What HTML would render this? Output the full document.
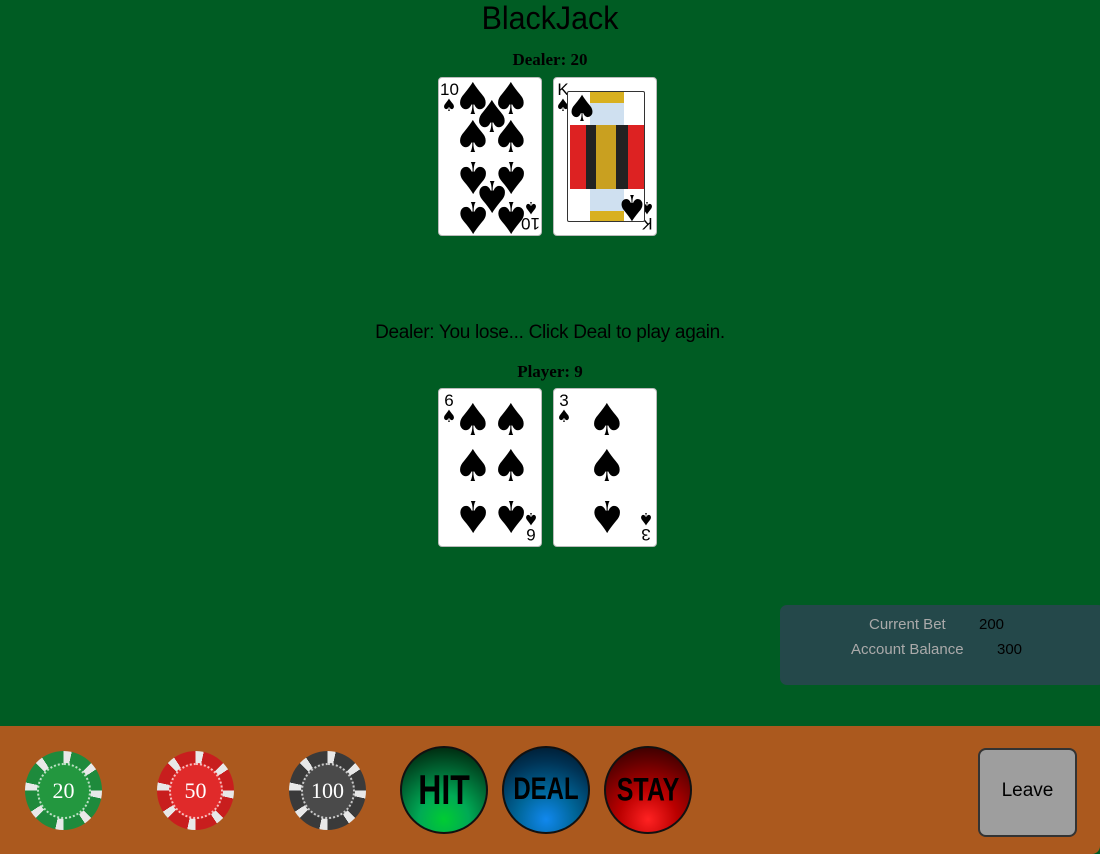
<!DOCTYPE html>
<html><head><meta charset="utf-8"><style>
*{margin:0;padding:0;box-sizing:border-box}
body{width:1100px;height:854px;background:#005c23;position:relative;overflow:hidden;font-family:"Liberation Serif",serif}
.title{position:absolute;top:0;left:0;width:1100px;text-align:center;font-family:"Liberation Sans",sans-serif;font-size:32px;color:#000;transform:scaleX(.95)}
.lbl{position:absolute;width:1100px;text-align:center;font-weight:bold;font-size:17px}
.card{position:absolute;width:104px;height:159px;background:#fff;border:1px solid #bbb;border-radius:4px;overflow:hidden}
.p{position:absolute;font-size:44px;line-height:1;transform:translate(-50%,-50%);font-family:"DejaVu Sans",sans-serif}
.r{transform:translate(-50%,-50%) rotate(180deg)}
.idx{position:absolute;font-family:"Liberation Sans",sans-serif;font-size:17px;line-height:1;text-align:center;width:18px}
.idx .s{font-size:17px;display:block;font-family:"DejaVu Sans",sans-serif}
.msg{position:absolute;top:322px;width:1100px;text-align:center;font-family:"Liberation Sans",sans-serif;font-size:19px;letter-spacing:-0.3px}
.panel{position:absolute;left:780px;top:605px;width:325px;height:80px;background:#24484a;border-radius:7px;font-family:"Liberation Sans",sans-serif;font-size:15px;color:#aaa}
.bar{position:absolute;left:0;top:726px;width:1100px;height:128px;background:#ab591e;border-bottom-right-radius:8px}
.chip{position:absolute;top:751px;width:77px;height:79px;border-radius:50%;display:flex;align-items:center;justify-content:center}
.chip .in{width:54px;height:56px;border-radius:50%;border:2px dotted rgba(255,255,255,.7);display:flex;align-items:center;justify-content:center;color:#fff;font-size:22px}
.btn{position:absolute;top:746px;width:88px;height:88px;border-radius:50%;border:2px solid #111;display:flex;align-items:center;justify-content:center;font-family:"Liberation Sans",sans-serif;font-weight:bold;color:#000}
.btn span{display:inline-block;transform:scaleY(1.3)}
.leave{position:absolute;left:978px;top:748px;width:99px;height:89px;background:#9e9e9e;border:2px solid #333;border-radius:8px;display:flex;align-items:center;justify-content:center;font-family:"Liberation Sans",sans-serif;font-size:19px;padding-bottom:4px}
</style></head><body>
<div class="title">BlackJack</div>
<div class="lbl" style="top:50px">Dealer: 20</div>

<div class="card" style="left:438px;top:77px">
<div class="idx" style="left:1px;top:3px">10<span class="s">♠</span></div>
<div class="idx" style="right:1px;bottom:3px;transform:rotate(180deg)">10<span class="s">♠</span></div>
<span class="p" style="left:34px;top:22px">♠</span><span class="p" style="left:72px;top:22px">♠</span>
<span class="p" style="left:53px;top:40px">♠</span>
<span class="p" style="left:34px;top:60px">♠</span><span class="p" style="left:72px;top:60px">♠</span>
<span class="p r" style="left:34px;top:98px">♠</span><span class="p r" style="left:72px;top:98px">♠</span>
<span class="p r" style="left:53px;top:117px">♠</span>
<span class="p r" style="left:34px;top:138px">♠</span><span class="p r" style="left:72px;top:138px">♠</span>
</div>

<div class="card" style="left:553px;top:77px">
<div class="idx" style="left:0;top:3px">K<span class="s">♠</span></div>
<div class="idx" style="right:0;bottom:3px;transform:rotate(180deg)">K<span class="s">♠</span></div>
<div style="position:absolute;left:13px;top:13px;width:78px;height:131px;border:1px solid #333;border-radius:2px;overflow:hidden;background:#fff">
<div style="position:absolute;left:22px;top:0;width:34px;height:12px;background:#d8b020"></div>
<div style="position:absolute;left:22px;top:11px;width:34px;height:22px;background:#cfe0f0"></div>
<div style="position:absolute;left:2px;top:33px;width:74px;height:64px;background:#d22"></div>
<div style="position:absolute;left:18px;top:33px;width:42px;height:64px;background:#222"></div>
<div style="position:absolute;left:28px;top:33px;width:20px;height:64px;background:#c9a020"></div>
<div style="position:absolute;left:22px;top:97px;width:34px;height:22px;background:#cfe0f0"></div>
<div style="position:absolute;left:22px;top:119px;width:34px;height:12px;background:#d8b020"></div>
<span class="p" style="left:14px;top:18px;font-size:36px">♠</span>
<span class="p r" style="left:64px;top:114px;font-size:36px">♠</span>
</div>
</div>

<div class="msg">Dealer: You lose... Click Deal to play again.</div>
<div class="lbl" style="top:362px">Player: 9</div>

<div class="card" style="left:438px;top:388px">
<div class="idx" style="left:1px;top:3px">6<span class="s">♠</span></div>
<div class="idx" style="right:1px;bottom:3px;transform:rotate(180deg)">6<span class="s">♠</span></div>
<span class="p" style="left:34px;top:32px">♠</span><span class="p" style="left:72px;top:32px">♠</span>
<span class="p" style="left:34px;top:78px">♠</span><span class="p" style="left:72px;top:78px">♠</span>
<span class="p r" style="left:34px;top:126px">♠</span><span class="p r" style="left:72px;top:126px">♠</span>
</div>

<div class="card" style="left:553px;top:388px">
<div class="idx" style="left:1px;top:3px">3<span class="s">♠</span></div>
<div class="idx" style="right:1px;bottom:3px;transform:rotate(180deg)">3<span class="s">♠</span></div>
<span class="p" style="left:53px;top:32px">♠</span>
<span class="p" style="left:53px;top:78px">♠</span>
<span class="p r" style="left:53px;top:126px">♠</span>
</div>

<div class="panel">
<div style="position:absolute;left:89px;top:11px">Current Bet</div><div style="position:absolute;left:199px;top:11px;color:#000">200</div>
<div style="position:absolute;left:71px;top:36px">Account Balance</div><div style="position:absolute;left:217px;top:36px;color:#000">300</div>
</div>

<div class="bar"></div>
<div class="chip" style="left:25px;background:repeating-conic-gradient(#e8e8e8 0 12deg,#1e8a3c 12deg 45deg)"><div class="in" style="background:#23973f">20</div></div>
<div class="chip" style="left:157px;background:repeating-conic-gradient(#e8e8e8 0 12deg,#c81e1e 12deg 45deg)"><div class="in" style="background:#e02a2a">50</div></div>
<div class="chip" style="left:289px;background:repeating-conic-gradient(#e8e8e8 0 12deg,#3a3a3a 12deg 45deg)"><div class="in" style="background:#4a4a4a">100</div></div>
<div class="btn" style="left:400px;background:radial-gradient(circle at 50% 85%,#0c3 0%,#0a5 30%,#063 60%,#010 100%);font-size:32px"><span>HIT</span></div>
<div class="btn" style="left:502px;background:radial-gradient(circle at 50% 85%,#18e 0%,#069 35%,#035 70%,#012 100%);font-size:24px"><span>DEAL</span></div>
<div class="btn" style="left:604px;background:radial-gradient(circle at 50% 85%,#f22 0%,#b00 35%,#600 70%,#200 100%);font-size:25px"><span>STAY</span></div>
<div class="leave">Leave</div>
</body></html>
